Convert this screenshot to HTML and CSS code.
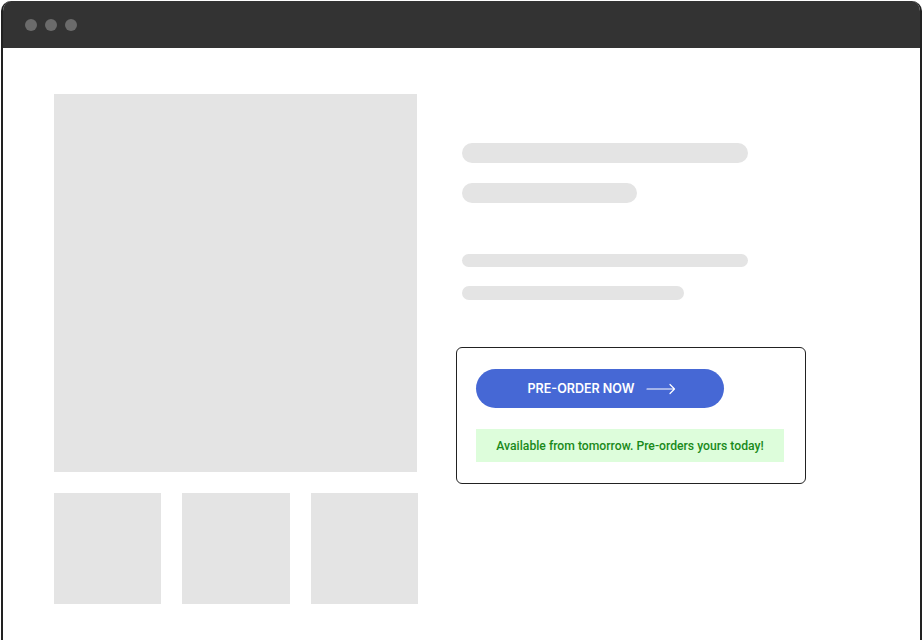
FILE: index.html
```html
<!DOCTYPE html>
<html lang="en">
<head>
    <meta charset="UTF-8">
    <title>Pre-order</title>
    <link rel="stylesheet" href="styles.css">
</head>
<body>
    <div class="window">
        <div class="titlebar">
            <span class="dot"></span>
            <span class="dot"></span>
            <span class="dot"></span>
        </div>
        <div class="content">
            <div class="gallery">
                <div class="main-image"></div>
                <div class="thumbs">
                    <div class="thumb"></div>
                    <div class="thumb"></div>
                    <div class="thumb"></div>
                </div>
            </div>
            <div class="details">
                <div class="bar title-long"></div>
                <div class="bar title-short"></div>
                <div class="bar line-long"></div>
                <div class="bar line-short"></div>
                <div class="order-box">
                    <button class="preorder">
                        PRE-ORDER NOW
                        <svg width="30" height="12" viewBox="0 0 30 12">
                            <path d="M1 6 H28.5 M24 1.5 L28.5 6 L24 10.5" fill="none" stroke="#fff" stroke-width="1.2" stroke-linecap="round" stroke-linejoin="round"/>
                        </svg>
                    </button>
                    <div class="notice">Available from tomorrow. Pre-orders yours today!</div>
                </div>
            </div>
        </div>
    </div>
</body>
</html>
```

FILE: styles.css
```css
* {
    box-sizing: border-box;
    margin: 0;
    padding: 0;
}

body {
    background-color: #fff;
    font-family: Roboto, "Liberation Sans", sans-serif;
    overflow: hidden;
}

.window {
    margin: 1px 1px 0 1px;
    height: 639px;
    border-left: 2px solid #222;
    border-right: 2px solid #222;
    border-radius: 10px 10px 0 0;
    overflow: hidden;
}

.titlebar {
    height: 47px;
    background-color: #333;
    display: flex;
    align-items: center;
    gap: 8px;
    padding-left: 22px;
}

.dot {
    width: 12px;
    height: 12px;
    border-radius: 50%;
    background-color: #6b6b6b;
}

.content {
    display: flex;
    padding: 46px 0 0 51px;
}

.gallery {
    width: 364px;
}

.main-image {
    width: 363px;
    height: 378px;
    background-color: #e4e4e4;
}

.thumbs {
    display: grid;
    grid-template-columns: repeat(3, 1fr);
    gap: 21px;
    margin-top: 21px;
}

.thumb {
    height: 111px;
    background-color: #e4e4e4;
}

.details {
    margin-left: 38px;
    padding-top: 49px;
}

.bar {
    background-color: #e4e4e4;
    margin-left: 6px;
}

.title-long {
    width: 286px;
    height: 20px;
    border-radius: 10px;
}

.title-short {
    width: 175px;
    height: 20px;
    border-radius: 10px;
    margin-top: 20px;
}

.line-long {
    width: 286px;
    height: 13px;
    border-radius: 7px;
    margin-top: 51px;
}

.line-short {
    width: 222px;
    height: 14px;
    border-radius: 7px;
    margin-top: 19px;
}

.order-box {
    width: 350px;
    margin-top: 47px;
    border: 1px solid #222;
    border-radius: 6px;
    padding: 21px 19px 21px 19px;
}

.preorder {
    width: 248px;
    height: 39px;
    border: none;
    border-radius: 20px;
    background-color: #4668d5;
    color: #fff;
    font-family: Inter, Roboto, sans-serif;
    font-weight: 600;
    font-size: 12.5px;
    display: flex;
    align-items: center;
    justify-content: center;
    gap: 12px;
    padding-left: 4px;
}

.notice {
    width: 308px;
    height: 33px;
    margin-top: 21px;
    background-color: #ddfddb;
    color: #1a8a1a;
    font-size: 12.2px;
    font-weight: 500;
    display: flex;
    align-items: center;
    justify-content: center;
}
```
